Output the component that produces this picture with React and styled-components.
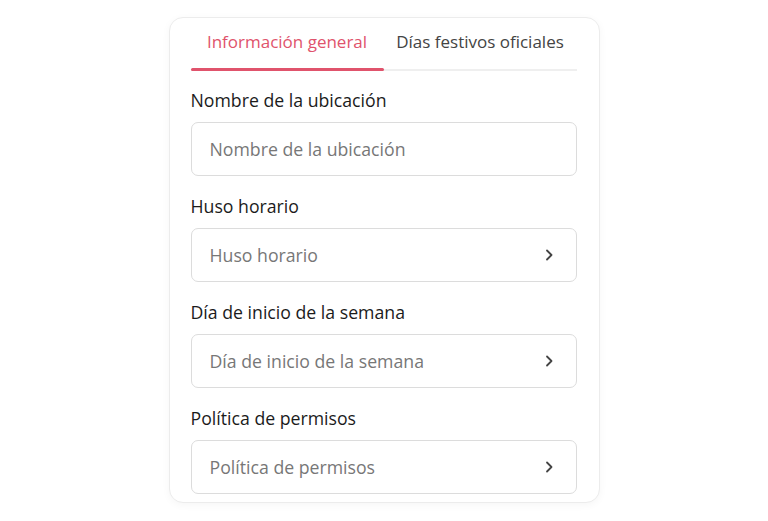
import styled, { createGlobalStyle } from "styled-components";

const Global = createGlobalStyle`
  body {
    margin: 0;
    background: #ffffff;
    font-family: "Open Sans", "Liberation Sans", sans-serif;
  }
`;

const fields = [
  { label: "Nombre de la ubicación", placeholder: "Nombre de la ubicación", select: false },
  { label: "Huso horario", placeholder: "Huso horario", select: true },
  { label: "Día de inicio de la semana", placeholder: "Día de inicio de la semana", select: true },
  { label: "Política de permisos", placeholder: "Política de permisos", select: true },
];

const Chevron = () => (
  <svg width="14" height="14" viewBox="0 0 14 14" fill="none">
    <path d="M5 2.5L9.5 7L5 11.5" stroke="#444" strokeWidth="1.8" strokeLinecap="round" strokeLinejoin="round" />
  </svg>
);

const App = () => {
  return (
    <Page>
      <Global />
      <Card>
        <TabList>
          <Tab $active>Información general</Tab>
          <Tab>Días festivos oficiales</Tab>
        </TabList>
        <Form>
          {fields.map((f) => (
            <Field key={f.label}>
              <Label>{f.label}</Label>
              <InputBox>
                <Placeholder>{f.placeholder}</Placeholder>
                {f.select && <Chevron />}
              </InputBox>
            </Field>
          ))}
        </Form>
      </Card>
    </Page>
  );
};

const Page = styled.div`
  width: 768px;
  height: 521px;
  display: flex;
  justify-content: center;
  align-items: flex-start;
  padding-top: 17px;
  box-sizing: border-box;
  overflow: hidden;
`;

const Card = styled.div`
  width: 431px;
  box-sizing: border-box;
  border: 1px solid #ececec;
  border-radius: 14px;
  box-shadow: 0 2px 8px rgba(0, 0, 0, 0.04);
  background: #fff;
  padding: 7px 22px 8px 21px;
`;

const TabList = styled.div`
  display: flex;
  box-shadow: inset 0 -2px 0 #efefef;
`;

const Tab = styled.div`
  position: relative;
  flex: 1;
  text-align: center;
  font-size: 17px;
  line-height: 24px;
  padding: 5px 0 17px;
  color: ${(p) => (p.$active ? "#e0536c" : "#444")};
  &::after {
    content: "";
    display: ${(p) => (p.$active ? "block" : "none")};
    position: absolute;
    left: 0;
    right: 0;
    bottom: 0;
    height: 3px;
    border-radius: 2px;
    background: #e0536c;
  }
`;

const Form = styled.div`
  display: flex;
  flex-direction: column;
  gap: 18px;
  padding-top: 17px;
`;

const Field = styled.div`
  display: flex;
  flex-direction: column;
  gap: 10px;
`;

const Label = styled.div`
  font-size: 17.7px;
  line-height: 24px;
  color: #1b1b1b;
`;

const InputBox = styled.div`
  height: 54px;
  box-sizing: border-box;
  border: 1px solid #dcdcdc;
  border-radius: 7px;
  display: flex;
  align-items: center;
  justify-content: space-between;
  padding: 0 20px 0 18px;
`;

const Placeholder = styled.span`
  font-size: 17.7px;
  color: #777;
`;

export default App;
